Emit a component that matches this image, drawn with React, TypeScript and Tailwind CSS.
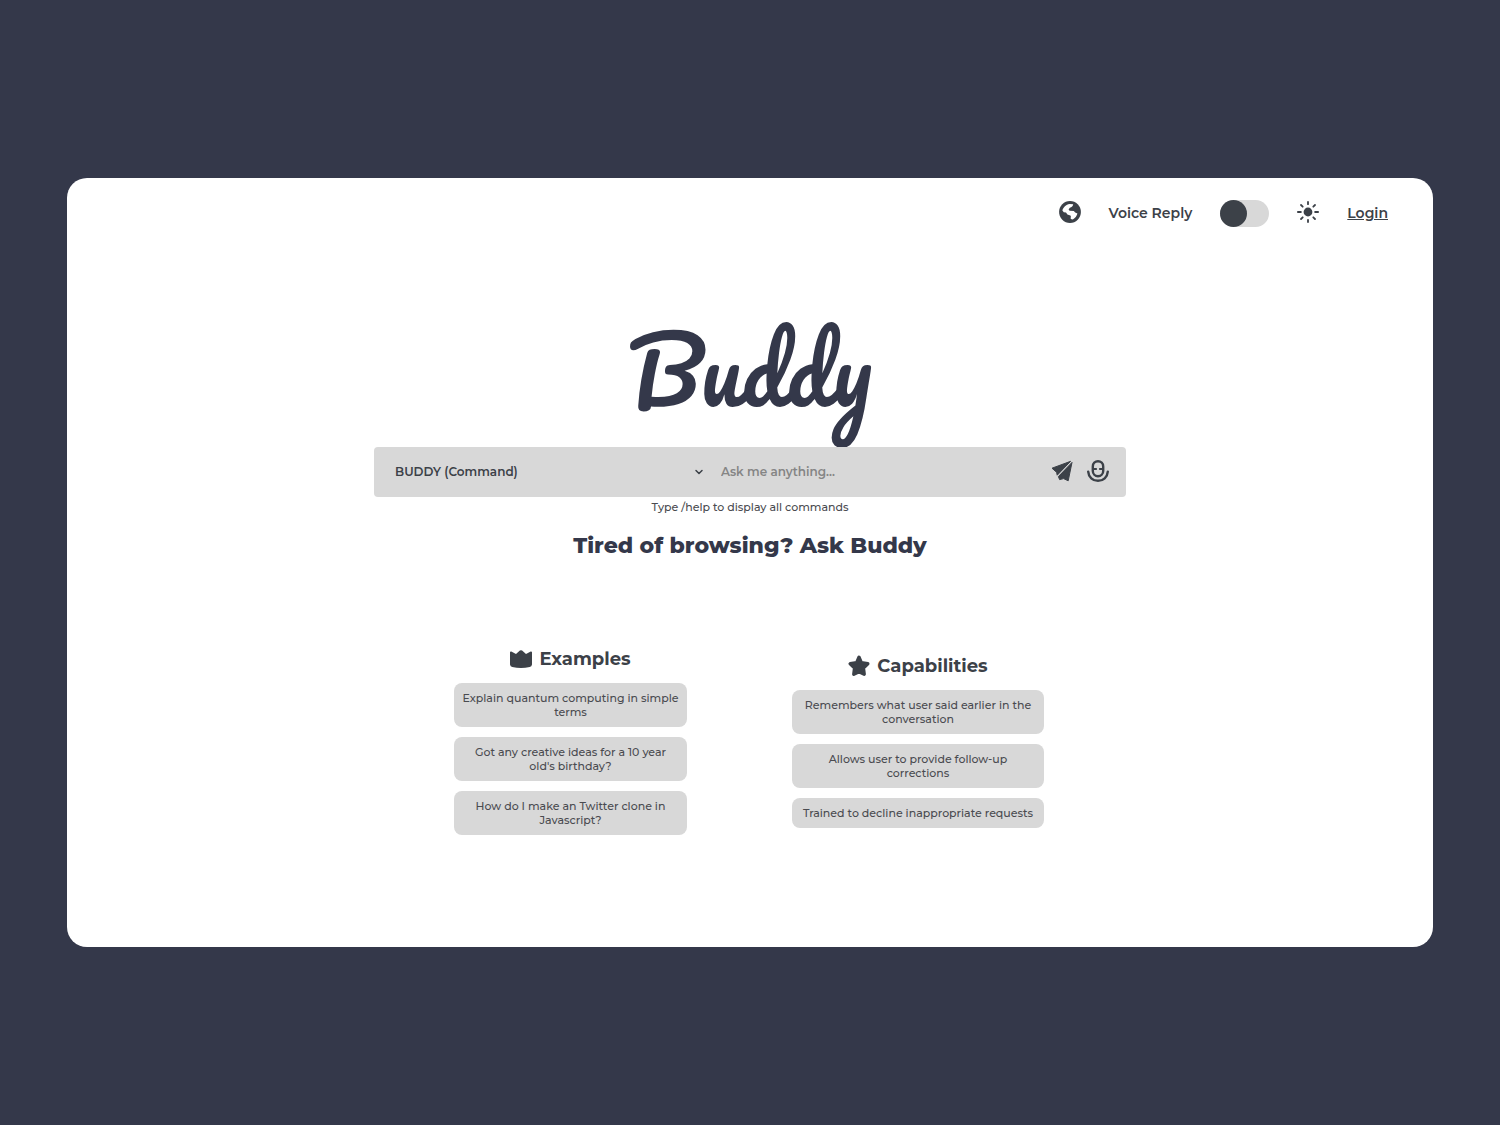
import React, { useState } from "react";
import { ChevronDown } from "lucide-react";

function GlobeIcon() {
  return (
    <svg viewBox="0 0 22 22" className="h-[22px] w-[22px]" aria-hidden="true">
      <circle cx="11" cy="11" r="10.9" fill="currentColor" />
      <path
        d="M3.4 9.6C4.2 6.2 7 3.5 10.6 3L14.2 3.3C14 5.4 12.8 6.3 10.8 6.8L9.6 8.6 10.6 9.8 14.8 10 16.2 11.6 18.4 12.6C17.8 15.2 16.2 17.2 13.8 18.4L11.8 18C11.4 16.6 12.4 15.6 11.4 14.6L8.4 13.6 7 11.4 4.8 11.2Z"
        fill="#fff"
      />
    </svg>
  );
}

function SunIcon() {
  return (
    <svg viewBox="0 0 22 22" className="h-[22px] w-[22px]" aria-hidden="true">
      <circle cx="11" cy="11" r="4.4" fill="currentColor" />
      <path
        d="M11 .9v2.3M11 18.8v2.3M.9 11h3M18.1 11h3M4 4l1.7 1.7M16.3 16.3 18 18M4 18l1.7-1.7M16.3 5.7 18 4"
        stroke="currentColor"
        strokeWidth="1.8"
        strokeLinecap="round"
      />
    </svg>
  );
}

function SendIcon() {
  return (
    <svg viewBox="0 0 22 22" className="h-[22px] w-[22px]" aria-hidden="true" fill="currentColor" stroke="currentColor" strokeWidth="1" strokeLinejoin="round">
      <path d="M1 8.2 19.6 1.3 6.2 15.2 5.6 12.3Z" />
      <path d="M21 2.4 17.2 20.8 12.6 18.6 8.6 19.6 7.4 16.6Z" />
    </svg>
  );
}

function MicIcon() {
  return (
    <svg viewBox="0 0 22 22" className="h-[22px] w-[22px]" aria-hidden="true" fill="none" stroke="currentColor" strokeLinecap="round">
      <rect x="5.8" y="1.2" width="10.4" height="15" rx="5.2" strokeWidth="2.4" />
      <path d="M1.2 11.6C1.6 17.2 5.8 20.8 11 20.8S20.4 17.2 20.8 11.6" strokeWidth="2.4" />
      <path d="M6.5 9h2.6M12.9 9h2.6" strokeWidth="2" />
    </svg>
  );
}

function CrownIcon() {
  return (
    <svg viewBox="0 0 22 18" className="h-[18px] w-[22px]" aria-hidden="true" fill="currentColor">
      <path d="M0 2.2Q.2 1.2 1.3 1.5L6 4.1 9.9.6Q11 0 12.1.6L16 4.1 20.7 1.5Q21.8 1.2 22 2.2V14.4Q21.7 16.4 19.7 16.9 11 18.9 2.3 16.9.3 16.4 0 14.4Z" />
    </svg>
  );
}

function StarIcon() {
  return (
    <svg viewBox="0 0 22 22" className="h-[22px] w-[22px]" aria-hidden="true" fill="currentColor" stroke="currentColor" strokeWidth="3.4" strokeLinejoin="round">
      <path d="M11 2.2 13.4 7.8 19.8 8.8 15.4 13 16.2 19.2 11 16.8 5.8 19.2 6.6 13 2.2 8.8 8.6 7.8Z" />
    </svg>
  );
}

const examples = [
  "Explain quantum computing in simple terms",
  "Got any creative ideas for a 10 year old's birthday?",
  "How do I make an Twitter clone in Javascript?",
];

const capabilities = [
  "Remembers what user said earlier in the conversation",
  "Allows user to provide follow-up corrections",
  "Trained to decline inappropriate requests",
];

const chip =
  "w-full rounded-lg bg-[#d8d8d8] px-2 py-2 text-center text-[11px] leading-[14px] font-medium text-[#4a4b50]";

export default function App() {
  const [voice, setVoice] = useState(false);
  return (
    <div className="flex min-h-screen items-center bg-[#34384a] px-[67px] font-['Montserrat','Inter',sans-serif] text-[#3c4148]">
      <main className="flex w-full flex-col items-center rounded-[20px] bg-white pb-28">
        <header className="flex w-full items-center justify-end gap-7 pt-[22px] pr-[45px]">
          <button type="button" aria-label="Language" className="pb-1">
            <GlobeIcon />
          </button>
          <label htmlFor="voice" className="text-[14px] font-semibold">
            Voice Reply
          </label>
          <input
            id="voice"
            type="checkbox"
            role="switch"
            checked={voice}
            onChange={(e) => setVoice(e.target.checked)}
            className="h-[27px] w-[49px] cursor-pointer appearance-none rounded-full bg-[#d8d8d8] before:block before:h-[27px] before:w-[27px] before:rounded-full before:bg-[#3c4148] checked:before:ml-auto"
          />
          <button type="button" aria-label="Light theme" className="pb-1">
            <SunIcon />
          </button>
          <a href="#login" className="text-[14px] font-semibold underline">
            Login
          </a>
        </header>

        <h1 className="mt-[70px] font-['Pacifico','Lato',cursive] text-[89px] leading-[144px] font-normal text-[#34384a]">
          Buddy
        </h1>

        <form className="mt-1.5 flex h-[50px] w-[752px] max-w-full items-center rounded bg-[#d8d8d8] pr-[17px] pl-[21px]" onSubmit={(e) => e.preventDefault()}>
          <div className="relative w-[310px]">
            <select aria-label="Mode" className="block w-full appearance-none bg-transparent text-[12px] font-semibold outline-none">
              <option>BUDDY (Command)</option>
            </select>
            <ChevronDown className="pointer-events-none absolute top-1/2 right-0 h-3 w-3 -translate-y-1/2" strokeWidth={3} />
          </div>
          <input
            aria-label="Ask me anything"
            placeholder="Ask me anything..."
            className="ml-4 min-w-0 flex-1 bg-transparent text-[12px] font-semibold outline-none placeholder:text-[#858585]"
          />
          <div className="flex gap-[14px] pb-0.5">
            <button type="submit" aria-label="Send">
              <SendIcon />
            </button>
            <button type="button" aria-label="Record">
              <MicIcon />
            </button>
          </div>
        </form>
        <p className="mt-[3px] text-[11px] leading-[14px] font-medium text-[#4a4b50]">Type /help to display all commands</p>
        <h2 className="mt-4 text-[22px] leading-8 font-extrabold text-[#34384a]">Tired of browsing? Ask Buddy</h2>

        <div className="mt-[85px] flex items-center justify-center gap-[105px] pr-0.5">
          <section className="flex w-[233px] flex-col items-center gap-[10px]">
            <h3 className="mb-[2px] flex items-center gap-[7px] text-[18px] leading-6 font-bold">
              <CrownIcon />
              Examples
            </h3>
            {examples.map((t) => (
              <button key={t} type="button" className={chip}>
                {t}
              </button>
            ))}
          </section>
          <section className="flex w-[252px] flex-col items-center gap-[10px]">
            <h3 className="mb-[2px] flex items-center gap-[7px] text-[18px] leading-6 font-bold">
              <StarIcon />
              Capabilities
            </h3>
            {capabilities.map((t) => (
              <button key={t} type="button" className={chip}>
                {t}
              </button>
            ))}
          </section>
        </div>
      </main>
    </div>
  );
}
